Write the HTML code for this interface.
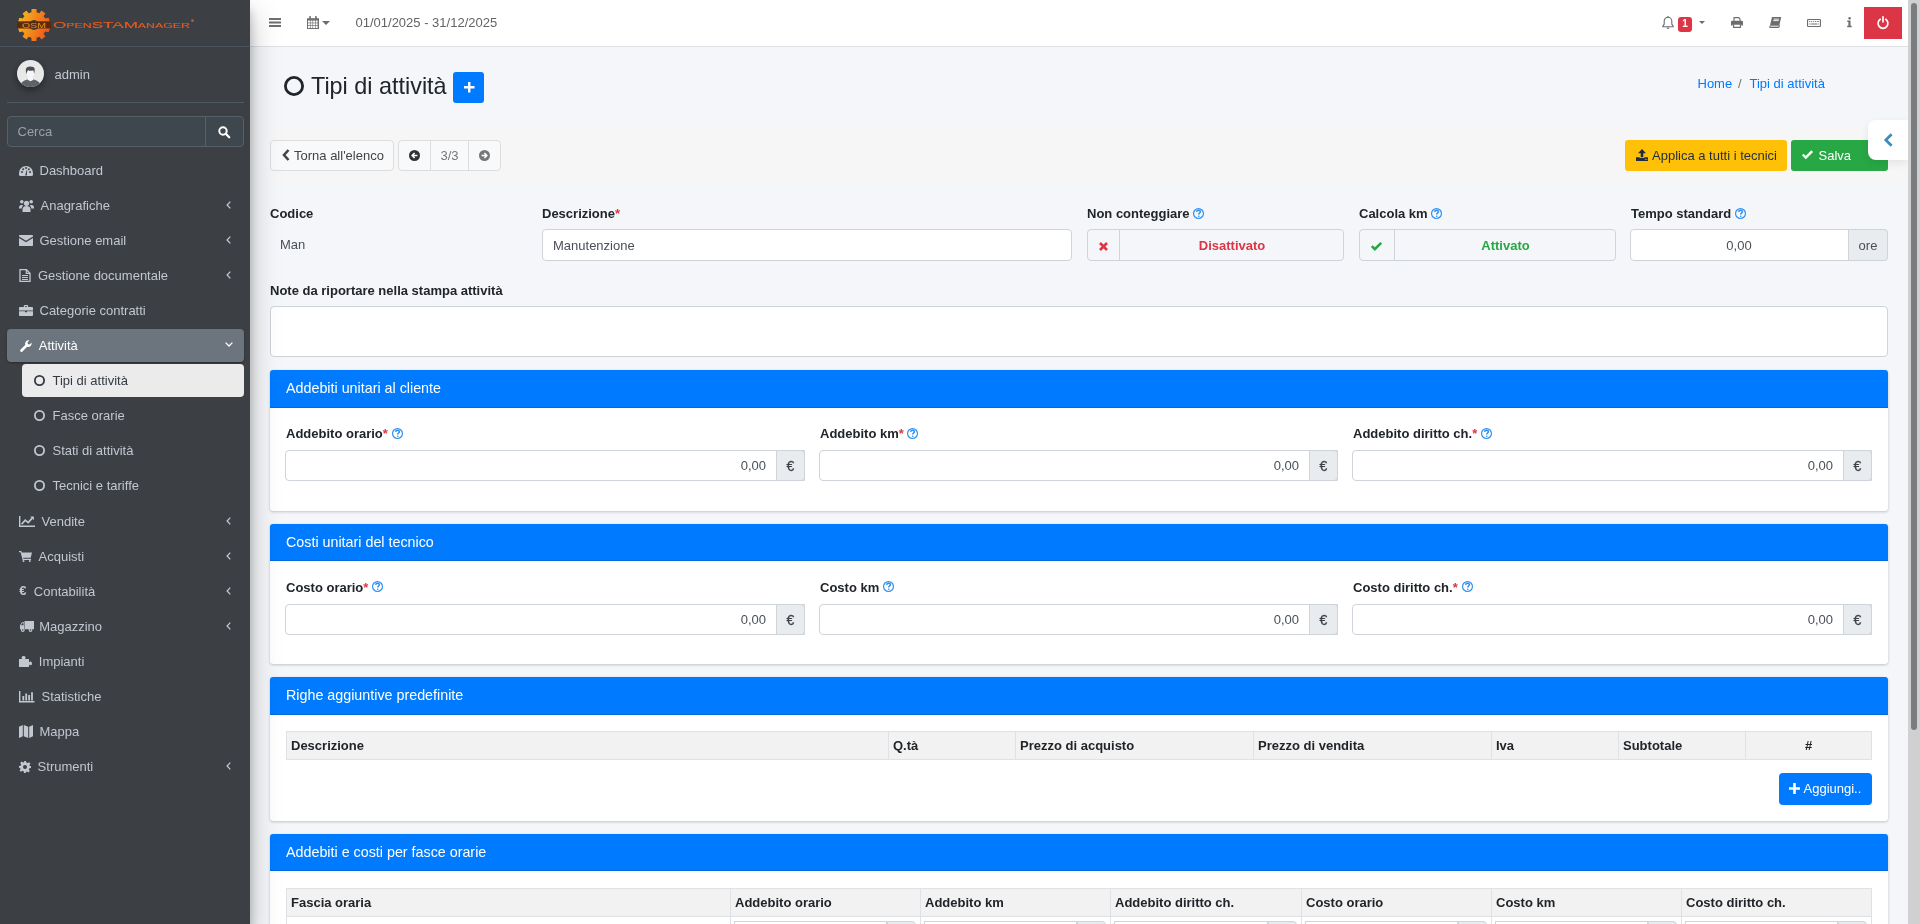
<!DOCTYPE html><html><head><meta charset="utf-8"><style>
*{box-sizing:border-box;margin:0;padding:0}
html,body{width:1920px;height:924px;overflow:hidden}
body{font-family:"Liberation Sans",sans-serif;font-size:13px;color:#212529;background:#f4f6f9;position:relative;will-change:transform}
.a{position:absolute}
svg{display:block;overflow:visible}
.t{position:absolute;white-space:nowrap;line-height:15px}
#sb{position:absolute;left:0;top:0;width:250px;height:924px;background:#3c3f44;z-index:5;box-shadow:0 14px 28px rgba(0,0,0,.25),0 10px 10px rgba(0,0,0,.22)}
#nb{position:absolute;left:250px;top:0;width:1658px;height:47px;background:#fff;border-bottom:1px solid #dee2e6}
.nav{position:absolute;left:7px;width:237px;height:33px;border-radius:4px;color:#c2c7d0}
.nav.active{background:#6c757d;color:#fff;box-shadow:0 1px 3px rgba(0,0,0,.12),0 1px 2px rgba(0,0,0,.24)}
.nav.sub{left:22px;width:222px}
.nav.subact{background:#ebebeb;color:#343a40}
.card{position:absolute;left:270px;width:1618px;background:#fff;border-radius:3px;box-shadow:0 0 1px rgba(0,0,0,.125),0 1px 3px rgba(0,0,0,.2)}
.card .hd{position:absolute;left:0;top:0;width:100%;height:38px;background:#007bff;border-radius:3px 3px 0 0}
.card .hd .t{left:16px;top:10px;color:#fff;font-size:14.3px;line-height:17px}
.lbl{position:absolute;white-space:nowrap;font-weight:bold;font-size:13px;line-height:15px;color:#212529}
.req{color:#dc3545}
.inp{position:absolute;height:31px;background:#fff;border:1px solid #ced4da;border-radius:4px}
.addon{position:absolute;top:-1px;height:31px;background:#e9ecef;border:1px solid #ced4da;border-radius:0 4px 4px 0;color:#495057}
.th{position:absolute;height:29px;background:#f2f2f2;border:1px solid #dee2e6}
.th .c{position:absolute;top:0;height:27px;border-left:1px solid #dee2e6}
.th .c .t{top:7px;left:5px;font-weight:bold;color:#212529}
</style></head><body>
<div id="sb">
<div class="a" style="left:0;top:46px;width:250px;height:1px;background:#4b545c"></div>
<svg class="a" style="left:17.5px;top:8.5px" width="32" height="32" viewBox="0 0 32 32">
<defs><linearGradient id="gg" x1="0" y1="0" x2="1" y2=".35"><stop offset="0" stop-color="#f9c21b"/><stop offset="1" stop-color="#ef5d1d"/></linearGradient></defs>
<path fill="url(#gg)" fill-rule="evenodd" d="M13.55 -0.12 L18.45 -0.12 L18.60 3.26 L21.39 4.17 L23.49 1.52 L27.45 4.40 L25.59 7.22 L27.31 9.59 L30.57 8.69 L32.08 13.35 L28.92 14.53 L28.92 17.47 L32.08 18.65 L30.57 23.31 L27.31 22.41 L25.59 24.78 L27.45 27.60 L23.49 30.48 L21.39 27.83 L18.60 28.74 L18.45 32.12 L13.55 32.12 L13.40 28.74 L10.61 27.83 L8.51 30.48 L4.55 27.60 L6.41 24.78 L4.69 22.41 L1.43 23.31 L-0.08 18.65 L3.08 17.47 L3.08 14.53 L-0.08 13.35 L1.43 8.69 L4.69 9.59 L6.41 7.22 L4.55 4.40 L8.51 1.52 L10.61 4.17 L13.40 3.26ZM16 11.0a5.0 5.0 0 1 0 0.01 0z"/>
<rect x="-1" y="12.3" width="34" height="7.2" fill="#5a280b" opacity=".95"/>
<text x="16" y="18.6" text-anchor="middle" font-family="Liberation Sans" font-size="6.8" fill="#e8961e" textLength="24" lengthAdjust="spacingAndGlyphs">OSM</text>
</svg>
<svg class="a" style="left:53px;top:15px" width="140" height="16" viewBox="0 0 140 16"><text x="0" y="13.3" font-family="Liberation Sans" font-size="9.7" fill="#ea5b1f" font-variant="small-caps" stroke="#ea5b1f" stroke-width=".12" textLength="137" lengthAdjust="spacingAndGlyphs">OpenSTAManager</text></svg>
<div class="a" style="left:190.5px;top:19px;width:3px;height:3px;border-radius:2px;background:#b35a30"></div>
<div class="a" style="left:17px;top:60px;width:27px;height:27px;border-radius:50%;box-shadow:0 3px 6px rgba(0,0,0,.16),0 3px 6px rgba(0,0,0,.23)"></div>
<svg class="a" style="left:17px;top:60px" width="27" height="27" viewBox="0 0 27 27">
<defs><clipPath id="cp"><circle cx="13.5" cy="13.5" r="13.5"/></clipPath></defs>
<circle cx="13.5" cy="13.5" r="13.5" fill="#e8e8e8"/>
<g clip-path="url(#cp)"><path d="M2.5 28c0-5 4.5-8.8 11-8.8s11 3.8 11 8.8z" fill="#5f6266"/>
<path d="M11 16.5h5v3.5l-2.5 1.3-2.5-1.3z" fill="#f6f6f6"/>
<ellipse cx="13.5" cy="12.8" rx="4.2" ry="4.6" fill="#f6f6f6"/>
<path d="M9.3 14.5c-.3-1.5-.6-3.2-.5-4.8.2-2.3 1.8-3.3 4.3-3.3 2.6 0 4.4.7 4.6 2.5.1 1.5-.2 3.2-.6 5-.2-1.5-.4-2.6-.8-3.3-1.7.3-3.6.2-5.3-.4-.8.8-1.3 2.2-1.7 4.3z" fill="#4a4d51"/></g>
</svg>
<div class="t" style="left:54.5px;top:67px;color:#c2c7d0;font-size:13px">admin</div>
<div class="a" style="left:7px;top:102px;width:237px;height:1px;background:#4f5962"></div>
<div class="a" style="left:7px;top:116px;width:237px;height:31px;border:1px solid #56606a;border-radius:4px;background:#3f474e"></div>
<div class="a" style="left:205px;top:117px;width:1px;height:29px;background:#56606a"></div>
<div class="t" style="left:17.5px;top:123.5px;color:#9ba1a8;font-size:13px">Cerca</div>
<svg class="a" style="left:218px;top:126px" width="13" height="12" viewBox="0 0 13 12"><circle cx="5" cy="5" r="3.7" fill="none" stroke="#fff" stroke-width="2"/><path d="M7.8 7.8l3.4 3.4" stroke="#fff" stroke-width="2.3" stroke-linecap="round"/></svg>
<div class="nav " style="top:153.50px">
<div class="a" style="left:12px;top:12px"><svg width="14" height="10" viewBox="0 0 14 10"><path d="M7 0A7 7 0 0 0 0 7v1.5q0 1.5 1.5 1.5h11q1.5 0 1.5-1.5V7A7 7 0 0 0 7 0z" fill="#c2c7d0"/><g fill="#3c3f44"><circle cx="3" cy="6" r="1"/><circle cx="4.2" cy="3.2" r="1"/><circle cx="7" cy="2" r="1"/><circle cx="11" cy="6" r="1"/><circle cx="9.8" cy="3.2" r="1"/><path d="M6.2 9.5L7.6 4.2 8.2 4.4 7.8 9.5z"/></g></svg></div>
<div class="t" style="left:32.5px;top:9px;line-height:15px;color:#c2c7d0">Dashboard</div>
</div>
<div class="nav " style="top:188.60px">
<div class="a" style="left:12px;top:10px"><svg width="15" height="13" viewBox="0 0 15 13"><g fill="#c2c7d0"><circle cx="7.5" cy="4.3" r="2.6"/><circle cx="2.8" cy="2.8" r="1.8"/><circle cx="12.2" cy="2.8" r="1.8"/><path d="M3.5 13v-2.5q0-3.5 4-3.5t4 3.5V13z"/><path d="M0 9q0-3 2.5-3 1.3 0 1.8.6Q2.7 8 2.7 9.5H0z"/><path d="M15 9q0-3-2.5-3-1.3 0-1.8.6 1.6 1.4 1.6 2.9H15z"/></g></svg></div>
<div class="t" style="left:33.5px;top:9px;line-height:15px;color:#c2c7d0">Anagrafiche</div>
<svg class="a" style="left:218.5px;top:12px" width="5" height="8" viewBox="0 0 5 8"><path d="M4.3.6L1.1 4l3.2 3.4" fill="none" stroke="#c2c7d0" stroke-width="1.3"/></svg>
</div>
<div class="nav " style="top:223.70px">
<div class="a" style="left:12px;top:11.5px"><svg width="14" height="11" viewBox="0 0 14 11"><g fill="#c2c7d0"><path d="M0 .8Q0 0 .8 0h12.4q.8 0 .8.8v.7L7 5.8 0 1.5z"/><path d="M0 3l7 4.3L14 3v7.2q0 .8-.8.8H.8Q0 11 0 10.2z"/></g></svg></div>
<div class="t" style="left:32.5px;top:9px;line-height:15px;color:#c2c7d0">Gestione email</div>
<svg class="a" style="left:218.5px;top:12px" width="5" height="8" viewBox="0 0 5 8"><path d="M4.3.6L1.1 4l3.2 3.4" fill="none" stroke="#c2c7d0" stroke-width="1.3"/></svg>
</div>
<div class="nav " style="top:258.80px">
<div class="a" style="left:12px;top:10px"><svg width="12" height="13" viewBox="0 0 12 13"><path d="M1 .7h6.5L11 4.2v8.1H1z" fill="none" stroke="#c2c7d0" stroke-width="1.3"/><path d="M7.3.7v3.6H11" fill="none" stroke="#c2c7d0" stroke-width="1.2"/><path d="M3 6.5h6M3 8.5h6M3 10.5h6" stroke="#c2c7d0" stroke-width="1"/></svg></div>
<div class="t" style="left:31px;top:9px;line-height:15px;color:#c2c7d0">Gestione documentale</div>
<svg class="a" style="left:218.5px;top:12px" width="5" height="8" viewBox="0 0 5 8"><path d="M4.3.6L1.1 4l3.2 3.4" fill="none" stroke="#c2c7d0" stroke-width="1.3"/></svg>
</div>
<div class="nav " style="top:293.90px">
<div class="a" style="left:12px;top:11px"><svg width="14" height="11" viewBox="0 0 14 11"><g fill="#c2c7d0"><path d="M4.8 2V.9Q4.8 0 5.7 0h2.6q.9 0 .9.9V2H8V1.2H6V2z"/><path d="M0 3q0-1 1-1h12q1 0 1 1v2.5H0z"/><path d="M0 6.3h6v1h2v-1h6V10q0 1-1 1H1q-1 0-1-1z"/></g></svg></div>
<div class="t" style="left:32.5px;top:9px;line-height:15px;color:#c2c7d0">Categorie contratti</div>
</div>
<div class="nav active" style="top:329.00px">
<div class="a" style="left:12.5px;top:11px"><svg width="12" height="12" viewBox="0 0 12 12"><path d="M11.6 2.6L9.7 4.5 7.9 4.1 7.5 2.3 9.4.4A3.5 3.5 0 0 0 5.2 4.9L.6 9.5a1.3 1.3 0 0 0 0 1.9 1.3 1.3 0 0 0 1.9 0l4.6-4.6a3.5 3.5 0 0 0 4.5-4.2z" fill="#fff"/></svg></div>
<div class="t" style="left:31.799999999999997px;top:9px;line-height:15px;color:#fff">Attività</div>
<svg class="a" style="left:217.8px;top:12.6px" width="8" height="5" viewBox="0 0 8 5"><path d="M.6.6L4 4l3.4-3.4" fill="none" stroke="#fff" stroke-width="1.3"/></svg>
</div>
<div class="nav sub subact" style="top:364.10px">
<div class="a" style="left:12px;top:11px"><svg width="11" height="11" viewBox="0 0 11 11"><circle cx="5.5" cy="5.5" r="4.6" fill="none" stroke="#343a40" stroke-width="1.8"/></svg></div>
<div class="t" style="left:30.5px;top:9px;line-height:15px;color:#343a40">Tipi di attività</div>
</div>
<div class="nav sub" style="top:399.20px">
<div class="a" style="left:12px;top:11px"><svg width="11" height="11" viewBox="0 0 11 11"><circle cx="5.5" cy="5.5" r="4.6" fill="none" stroke="#c2c7d0" stroke-width="1.8"/></svg></div>
<div class="t" style="left:30.5px;top:9px;line-height:15px;color:#c2c7d0">Fasce orarie</div>
</div>
<div class="nav sub" style="top:434.30px">
<div class="a" style="left:12px;top:11px"><svg width="11" height="11" viewBox="0 0 11 11"><circle cx="5.5" cy="5.5" r="4.6" fill="none" stroke="#c2c7d0" stroke-width="1.8"/></svg></div>
<div class="t" style="left:30.5px;top:9px;line-height:15px;color:#c2c7d0">Stati di attività</div>
</div>
<div class="nav sub" style="top:469.40px">
<div class="a" style="left:12px;top:11px"><svg width="11" height="11" viewBox="0 0 11 11"><circle cx="5.5" cy="5.5" r="4.6" fill="none" stroke="#c2c7d0" stroke-width="1.8"/></svg></div>
<div class="t" style="left:30.5px;top:9px;line-height:15px;color:#c2c7d0">Tecnici e tariffe</div>
</div>
<div class="nav " style="top:504.50px">
<div class="a" style="left:12px;top:11px"><svg width="16" height="11" viewBox="0 0 16 11"><path d="M.7 0v10.3H16" fill="none" stroke="#c2c7d0" stroke-width="1.4"/><path d="M2.6 8.2l3.6-4 3 2.4L13.6 1.6" fill="none" stroke="#c2c7d0" stroke-width="1.7"/><path d="M11.3 .6h3.6v3.6z" fill="#c2c7d0"/></svg></div>
<div class="t" style="left:34.5px;top:9px;line-height:15px;color:#c2c7d0">Vendite</div>
<svg class="a" style="left:218.5px;top:12px" width="5" height="8" viewBox="0 0 5 8"><path d="M4.3.6L1.1 4l3.2 3.4" fill="none" stroke="#c2c7d0" stroke-width="1.3"/></svg>
</div>
<div class="nav " style="top:539.60px">
<div class="a" style="left:12.2px;top:11px"><svg width="13" height="11" viewBox="0 0 13 11"><g fill="#c2c7d0"><path d="M0 0h2.3l.5 1.5H13l-1.3 5.2H4.1l.4 1H12v1.2H3.6L1.6 1.2H0z"/><circle cx="4.5" cy="10" r="1"/><circle cx="10.8" cy="10" r="1"/></g></svg></div>
<div class="t" style="left:31.6px;top:9px;line-height:15px;color:#c2c7d0">Acquisti</div>
<svg class="a" style="left:218.5px;top:12px" width="5" height="8" viewBox="0 0 5 8"><path d="M4.3.6L1.1 4l3.2 3.4" fill="none" stroke="#c2c7d0" stroke-width="1.3"/></svg>
</div>
<div class="nav " style="top:574.70px">
<div class="a" style="left:12.7px;top:11px"><div style="font-weight:bold;font-size:13px;line-height:15px;color:#c2c7d0;margin-top:-3px;margin-left:-.5px">€</div></div>
<div class="t" style="left:26.799999999999997px;top:9px;line-height:15px;color:#c2c7d0">Contabilità</div>
<svg class="a" style="left:218.5px;top:12px" width="5" height="8" viewBox="0 0 5 8"><path d="M4.3.6L1.1 4l3.2 3.4" fill="none" stroke="#c2c7d0" stroke-width="1.3"/></svg>
</div>
<div class="nav " style="top:609.80px">
<div class="a" style="left:12.7px;top:11px"><svg width="14" height="11" viewBox="0 0 14 11"><g fill="#c2c7d0"><path d="M4.5 0h9.5v8.2H4.5z"/><path d="M0 4.2l2-3h2v7H0z"/><circle cx="2.8" cy="9" r="1.9"/><circle cx="10.5" cy="9" r="1.9"/></g><g fill="#3c3f44"><circle cx="2.8" cy="9" r=".8"/><circle cx="10.5" cy="9" r=".8"/><path d="M1 4.2l1.2-2h1.3v2z"/></g></svg></div>
<div class="t" style="left:32.2px;top:9px;line-height:15px;color:#c2c7d0">Magazzino</div>
<svg class="a" style="left:218.5px;top:12px" width="5" height="8" viewBox="0 0 5 8"><path d="M4.3.6L1.1 4l3.2 3.4" fill="none" stroke="#c2c7d0" stroke-width="1.3"/></svg>
</div>
<div class="nav " style="top:644.90px">
<div class="a" style="left:11.8px;top:11px"><svg width="13" height="11" viewBox="0 0 13 11"><path d="M0 3h3.3Q2.4 2.2 2.6 1.2 3 0 4.6 0t2 1.2q.2 1-.7 1.8H10v3.3q.8-.9 1.8-.7Q13 6 13 7.5T11.8 9.2Q10.8 9.4 10 8.5V11H0z" fill="#c2c7d0"/></svg></div>
<div class="t" style="left:31.799999999999997px;top:9px;line-height:15px;color:#c2c7d0">Impianti</div>
</div>
<div class="nav " style="top:680.00px">
<div class="a" style="left:12px;top:10.5px"><svg width="16" height="11.5" viewBox="0 0 16 11.5"><path d="M.7 0v10.8H15.5" fill="none" stroke="#c2c7d0" stroke-width="1.4"/><path d="M3.4 5h1.8v4.5H3.4zM6.3 2.5h1.8v7H6.3zM9.2 4h1.8v5.5H9.2zM12.1 1.2h1.8v8.3h-1.8z" fill="#c2c7d0"/></svg></div>
<div class="t" style="left:34.5px;top:9px;line-height:15px;color:#c2c7d0">Statistiche</div>
</div>
<div class="nav " style="top:715.10px">
<div class="a" style="left:12px;top:10px"><svg width="14" height="13" viewBox="0 0 14 13"><g fill="#c2c7d0"><path d="M0 1.8L3.8 0v11.2L0 13z"/><path d="M4.8 0l4.4 1.8V13L4.8 11.2z"/><path d="M10.2 1.8L14 0v11.2L10.2 13z"/></g></svg></div>
<div class="t" style="left:32.4px;top:9px;line-height:15px;color:#c2c7d0">Mappa</div>
</div>
<div class="nav " style="top:750.20px">
<div class="a" style="left:12px;top:10.5px"><svg width="12" height="12" viewBox="0 0 12 12" style="margin-top:0"><path d="M5 0h2l.3 1.6a4.6 4.6 0 0 1 1.3.6l1.4-1 1.4 1.4-1 1.4a4.6 4.6 0 0 1 .6 1.3L12 5v2l-1.6.3a4.6 4.6 0 0 1-.6 1.3l1 1.4-1.4 1.4-1.4-1a4.6 4.6 0 0 1-1.3.6L7 12H5l-.3-1.6a4.6 4.6 0 0 1-1.3-.6l-1.4 1-1.4-1.4 1-1.4a4.6 4.6 0 0 1-.6-1.3L0 7V5l1.6-.3a4.6 4.6 0 0 1 .6-1.3l-1-1.4 1.4-1.4 1.4 1a4.6 4.6 0 0 1 1.3-.6zM6 4a2 2 0 1 0 0 4 2 2 0 0 0 0-4z" fill="#c2c7d0"/></svg></div>
<div class="t" style="left:30.6px;top:9px;line-height:15px;color:#c2c7d0">Strumenti</div>
<svg class="a" style="left:218.5px;top:12px" width="5" height="8" viewBox="0 0 5 8"><path d="M4.3.6L1.1 4l3.2 3.4" fill="none" stroke="#c2c7d0" stroke-width="1.3"/></svg>
</div>
</div>
<div id="nb"></div>
<svg class="a" style="left:269px;top:18px" width="12" height="9" viewBox="0 0 12 9"><path d="M0 .1h12v1.8H0zM0 3.6h12v1.8H0zM0 7.1h12v1.8H0z" fill="#707070"/></svg>
<svg class="a" style="left:307px;top:16px" width="12" height="13" viewBox="0 0 12 13"><g fill="#707070"><path d="M0 2.2h12v10.8H0z"/><rect x="2.2" y="0" width="1.7" height="3.3" rx=".6"/><rect x="8.1" y="0" width="1.7" height="3.3" rx=".6"/></g><g fill="#fff"><rect x="1.00" y="4.6" width="1.95" height="2.0"/><rect x="3.55" y="4.6" width="1.95" height="2.0"/><rect x="6.10" y="4.6" width="1.95" height="2.0"/><rect x="8.65" y="4.6" width="1.95" height="2.0"/><rect x="1.00" y="7.3" width="1.95" height="2.0"/><rect x="3.55" y="7.3" width="1.95" height="2.0"/><rect x="6.10" y="7.3" width="1.95" height="2.0"/><rect x="8.65" y="7.3" width="1.95" height="2.0"/><rect x="1.00" y="10.0" width="1.95" height="2.0"/><rect x="3.55" y="10.0" width="1.95" height="2.0"/><rect x="6.10" y="10.0" width="1.95" height="2.0"/><rect x="8.65" y="10.0" width="1.95" height="2.0"/></g></svg>
<svg class="a" style="left:322px;top:21px" width="8" height="4" viewBox="0 0 8 4"><path d="M0 0h8L4 4z" fill="#6c6c6c"/></svg>
<div class="t" style="left:355.5px;top:15px;color:#646464;font-size:13px">01/01/2025 - 31/12/2025</div>
<svg class="a" style="left:1662px;top:16px" width="12" height="13" viewBox="0 0 12 13"><path d="M6 1.2a3.8 3.8 0 0 0-3.8 3.8v3.2L.8 10.1v.7h10.4v-.7L9.8 8.2V5A3.8 3.8 0 0 0 6 1.2z" fill="none" stroke="#6c6c6c" stroke-width="1.1"/><path d="M4.6 11.6a1.4 1.4 0 0 0 2.8 0z" fill="#6c6c6c"/><rect x="5.4" y="0" width="1.2" height="1.5" fill="#6c6c6c"/></svg>
<div class="a" style="left:1678px;top:17px;width:14px;height:15px;border-radius:3px;background:#dc3545"></div>
<div class="t" style="left:1678px;top:17.5px;width:14px;text-align:center;color:#fff;font-size:10px;line-height:12px;font-weight:bold">1</div>
<svg class="a" style="left:1699px;top:21px" width="6" height="3" viewBox="0 0 6 3"><path d="M0 0h6L3 3z" fill="#6c6c6c"/></svg>
<svg class="a" style="left:1731px;top:17px" width="12" height="11" viewBox="0 0 12 11"><path d="M3 .6h4.6l1.4 1.4v2.6H3z" fill="#fff" stroke="#6c6c6c" stroke-width="1.1"/><path d="M0 5q0-1.2 1.2-1.2h9.6Q12 3.8 12 5v3.5h-1.8V7H1.8v1.5H0z" fill="#6c6c6c"/><path d="M2.6 7.3h6.8v3.1H2.6z" fill="#fff" stroke="#6c6c6c" stroke-width="1.1"/></svg>
<svg class="a" style="left:1769px;top:17px" width="13" height="11" viewBox="0 0 13 11"><path d="M3 0h9.2L10.3 8.4H1z" fill="#6c6c6c"/><path d="M4.6 2.1h5.4M4.3 3.6h5.4" stroke="#fff" stroke-width=".9"/><path d="M1 8.4h9.3l.9-.9-.6 2.6q-.2.8-1 .8H1.2Q0 10.9.2 9.7z" fill="#6c6c6c"/><path d="M1.4 9.4h8.2" stroke="#fff" stroke-width=".7"/></svg>
<svg class="a" style="left:1807px;top:19px" width="14" height="8" viewBox="0 0 14 8"><rect x=".55" y=".55" width="12.9" height="6.9" rx=".8" fill="none" stroke="#6c6c6c" stroke-width="1.1"/><g fill="#6c6c6c"><path d="M2.2 2h1v1h-1zM4.2 2h1v1h-1zM6.2 2h1v1h-1zM8.2 2h1v1h-1zM10.2 2h1.6v1h-1.6zM2.2 4.6h1.2v1h-1.2zM4 4.6h6v1H4zM10.6 4.6h1.2v1h-1.2z"/></g></svg>
<svg class="a" style="left:1846.5px;top:16.7px" width="5" height="10.3" viewBox="0 0 5 10.3"><g fill="#6c6c6c"><circle cx="2.6" cy="1.2" r="1.2"/><path d="M.3 3.6h3.2v5.2h1.2v1.5H.2V8.8h1.2V5.1H.3z"/></g></svg>
<div class="a" style="left:1864px;top:7px;width:38px;height:32px;background:#dc3545"></div>
<svg class="a" style="left:1877px;top:16px" width="12" height="13" viewBox="0 0 12 13"><path d="M3.3 3.3a4.9 4.9 0 1 0 5.4 0" fill="none" stroke="#fff" stroke-width="1.7" stroke-linecap="round"/><path d="M6 .8v5" stroke="#fff" stroke-width="1.7" stroke-linecap="round"/></svg>
<svg class="a" style="left:284px;top:76px" width="20" height="20" viewBox="0 0 20 20"><circle cx="10" cy="10" r="8.6" fill="none" stroke="#212529" stroke-width="2.8"/></svg>
<div class="t" style="left:311px;top:73px;font-size:23.4px;line-height:27px;color:#212529">Tipi di attività</div>
<div class="a" style="left:453px;top:72px;width:31px;height:31px;border-radius:3px;background:#007bff"></div>
<svg class="a" style="left:463.5px;top:82px" width="10.5" height="10.5" viewBox="0 0 10.5 10.5"><path d="M4.05 0h2.4v4.05h4.05v2.4H6.45v4.05h-2.4V6.45H0v-2.4h4.05z" fill="#fff"/></svg>
<div class="t" style="left:1697.5px;top:76px;color:#007bff">Home</div>
<div class="t" style="left:1738px;top:76px;color:#6c757d">/</div>
<div class="t" style="left:1749.5px;top:76px;color:#007bff">Tipi di attività</div>
<div class="a" style="left:270px;top:126px;width:1638px;height:58px;background:#f6f6f6"></div>
<div class="a" style="left:270px;top:140px;width:124px;height:31px;background:#f8f9fa;border:1px solid #ddd;border-radius:4px"></div>
<svg class="a" style="left:282px;top:149px" width="8" height="12" viewBox="0 0 8 12"><path d="M6.5 1L2 6l4.5 5" fill="none" stroke="#444" stroke-width="2.6"/></svg>
<div class="t" style="left:294px;top:147.5px;color:#444">Torna all'elenco</div>
<div class="a" style="left:398px;top:140px;width:103px;height:31px;background:#f8f9fa;border:1px solid #ddd;border-radius:4px"></div>
<div class="a" style="left:430px;top:141px;width:1px;height:29px;background:#ddd"></div>
<div class="a" style="left:468px;top:141px;width:1px;height:29px;background:#ddd"></div>
<svg class="a" style="left:408.5px;top:150px" width="11" height="11" viewBox="0 0 11 11"><circle cx="5.5" cy="5.5" r="5.5" fill="#333"/><path d="M8.4 5.5H3.4M5.6 3L3.2 5.5 5.6 8" fill="none" stroke="#fff" stroke-width="1.6"/></svg>
<div class="t" style="left:440.5px;top:147.5px;color:#777">3/3</div>
<svg class="a" style="left:479px;top:150px" width="11" height="11" viewBox="0 0 11 11"><circle cx="5.5" cy="5.5" r="5.5" fill="#777"/><path d="M2.6 5.5h5M5.4 3l2.4 2.5L5.4 8" fill="none" stroke="#fff" stroke-width="1.6"/></svg>
<div class="a" style="left:1625px;top:140px;width:162px;height:31px;background:#ffc107;border-radius:3px"></div>
<svg class="a" style="left:1636px;top:149px" width="12" height="12" viewBox="0 0 12 12"><path d="M6 0l4 4.2H7.3v4H4.7v-4H2z" fill="#1f2d3d"/><path d="M0 8.2h3.7v.9h4.6v-.9H12V12H0z" fill="#1f2d3d"/><circle cx="9.3" cy="10.3" r=".5" fill="#ffc107"/><circle cx="10.8" cy="10.3" r=".5" fill="#ffc107"/></svg>
<div class="t" style="left:1652px;top:147.5px;color:#1f2d3d">Applica a tutti i tecnici</div>
<div class="a" style="left:1791px;top:140px;width:97px;height:31px;background:#28a745;border-radius:3px"></div>
<svg class="a" style="left:1802px;top:150px" width="11" height="9" viewBox="0 0 11 9"><path d="M.8 4.5l3 3 6.4-6.4" fill="none" stroke="#fff" stroke-width="2.4"/></svg>
<div class="t" style="left:1818.5px;top:147.5px;color:#fff">Salva</div>
<div class="a" style="left:1868px;top:120px;width:40px;height:40px;background:#fff;border-radius:8px 0 0 8px;box-shadow:0 3px 8px rgba(0,0,0,.08)"></div>
<svg class="a" style="left:1884px;top:132.5px" width="9" height="14" viewBox="0 0 9 14"><path d="M7.6 1.2L1.8 7l5.8 5.8" fill="none" stroke="#3c8dbc" stroke-width="2.7"/></svg>
<div class="lbl" style="left:270px;top:206px">Codice</div>
<div class="t" style="left:280px;top:237px;color:#495057">Man</div>
<div class="lbl" style="left:542px;top:206px">Descrizione<span class="req">*</span></div>
<div class="inp" style="left:542px;top:229px;width:530px;height:32px"></div>
<div class="t" style="left:553px;top:238px;color:#495057">Manutenzione</div>
<div class="lbl" style="left:1087px;top:206px">Non conteggiare</div>
<svg class="a" style="left:1193px;top:207.5px" width="11" height="11" viewBox="0 0 11 11"><circle cx="5.5" cy="5.5" r="4.95" fill="none" stroke="#2b8ff2" stroke-width="1.15"/><path d="M3.6 3.9q.3-1.6 2-1.6 1.8 0 1.8 1.5 0 .8-.9 1.3-.7.4-.7 1.2v.3" fill="none" stroke="#2b8ff2" stroke-width="1.5"/><circle cx="5.75" cy="8.3" r=".8" fill="#2b8ff2"/></svg>
<div class="a" style="left:1087px;top:229px;width:257px;height:32px;border:1px solid #ced4da;border-radius:4px"></div>
<div class="a" style="left:1119px;top:230px;width:1px;height:30px;background:#ced4da"></div>
<svg class="a" style="left:1099px;top:241.5px" width="9" height="9" viewBox="0 0 9 9"><path d="M1 1l7 7M8 1L1 8" stroke="#dc3545" stroke-width="2.6"/></svg>
<div class="t" style="left:1120px;top:238px;width:224px;text-align:center;color:#dc3545;font-weight:bold">Disattivato</div>
<div class="lbl" style="left:1359px;top:206px">Calcola km</div>
<svg class="a" style="left:1431px;top:207.5px" width="11" height="11" viewBox="0 0 11 11"><circle cx="5.5" cy="5.5" r="4.95" fill="none" stroke="#2b8ff2" stroke-width="1.15"/><path d="M3.6 3.9q.3-1.6 2-1.6 1.8 0 1.8 1.5 0 .8-.9 1.3-.7.4-.7 1.2v.3" fill="none" stroke="#2b8ff2" stroke-width="1.5"/><circle cx="5.75" cy="8.3" r=".8" fill="#2b8ff2"/></svg>
<div class="a" style="left:1359px;top:229px;width:257px;height:32px;border:1px solid #ced4da;border-radius:4px"></div>
<div class="a" style="left:1394px;top:230px;width:1px;height:30px;background:#ced4da"></div>
<svg class="a" style="left:1371px;top:241.5px" width="11" height="9" viewBox="0 0 11 9"><path d="M.8 4.2l3 3L10.2.8" fill="none" stroke="#28a745" stroke-width="2.6"/></svg>
<div class="t" style="left:1395px;top:238px;width:221px;text-align:center;color:#28a745;font-weight:bold">Attivato</div>
<div class="lbl" style="left:1631px;top:206px">Tempo standard</div>
<svg class="a" style="left:1734.5px;top:207.5px" width="11" height="11" viewBox="0 0 11 11"><circle cx="5.5" cy="5.5" r="4.95" fill="none" stroke="#2b8ff2" stroke-width="1.15"/><path d="M3.6 3.9q.3-1.6 2-1.6 1.8 0 1.8 1.5 0 .8-.9 1.3-.7.4-.7 1.2v.3" fill="none" stroke="#2b8ff2" stroke-width="1.5"/><circle cx="5.75" cy="8.3" r=".8" fill="#2b8ff2"/></svg>
<div class="inp" style="left:1630px;top:229px;width:258px;height:32px"></div>
<div class="a" style="left:1848px;top:229px;width:40px;height:32px;background:#e9ecef;border:1px solid #ced4da;border-radius:0 4px 4px 0"></div>
<div class="t" style="left:1630px;top:238px;width:218px;text-align:center;color:#495057">0,00</div>
<div class="t" style="left:1848px;top:238px;width:40px;text-align:center;color:#495057">ore</div>
<div class="lbl" style="left:270px;top:283px">Note da riportare nella stampa attività</div>
<div class="inp" style="left:270px;top:306px;width:1618px;height:51px"></div>
<div class="card" style="top:370px;height:141px"><div class="hd" style="height:38px;border-bottom:1px solid rgba(0,0,0,.125)"><div class="t">Addebiti unitari al cliente</div></div></div>
<div class="lbl" style="left:286px;top:426px">Addebito orario<span class="req">*</span></div>
<svg class="a" style="left:391.5px;top:427.5px" width="11" height="11" viewBox="0 0 11 11"><circle cx="5.5" cy="5.5" r="4.95" fill="none" stroke="#2b8ff2" stroke-width="1.15"/><path d="M3.6 3.9q.3-1.6 2-1.6 1.8 0 1.8 1.5 0 .8-.9 1.3-.7.4-.7 1.2v.3" fill="none" stroke="#2b8ff2" stroke-width="1.5"/><circle cx="5.75" cy="8.3" r=".8" fill="#2b8ff2"/></svg>
<div class="lbl" style="left:820px;top:426px">Addebito km<span class="req">*</span></div>
<svg class="a" style="left:907px;top:427.5px" width="11" height="11" viewBox="0 0 11 11"><circle cx="5.5" cy="5.5" r="4.95" fill="none" stroke="#2b8ff2" stroke-width="1.15"/><path d="M3.6 3.9q.3-1.6 2-1.6 1.8 0 1.8 1.5 0 .8-.9 1.3-.7.4-.7 1.2v.3" fill="none" stroke="#2b8ff2" stroke-width="1.5"/><circle cx="5.75" cy="8.3" r=".8" fill="#2b8ff2"/></svg>
<div class="lbl" style="left:1353px;top:426px">Addebito diritto ch.<span class="req">*</span></div>
<svg class="a" style="left:1481px;top:427.5px" width="11" height="11" viewBox="0 0 11 11"><circle cx="5.5" cy="5.5" r="4.95" fill="none" stroke="#2b8ff2" stroke-width="1.15"/><path d="M3.6 3.9q.3-1.6 2-1.6 1.8 0 1.8 1.5 0 .8-.9 1.3-.7.4-.7 1.2v.3" fill="none" stroke="#2b8ff2" stroke-width="1.5"/><circle cx="5.75" cy="8.3" r=".8" fill="#2b8ff2"/></svg>
<div class="inp" style="left:285px;top:450px;width:520px;height:31px;border-radius:4px 0 0 4px"></div>
<div class="a" style="left:776px;top:450px;width:29px;height:31px;background:#e9ecef;border:1px solid #ced4da;border-radius:0 4px 4px 0"></div>
<div class="t" style="left:285px;top:457.5px;width:481px;text-align:right;color:#495057">0,00</div>
<div class="t" style="left:776px;top:459px;width:29px;text-align:center;color:#3d4349;font-size:14px;-webkit-text-stroke:.3px #3d4349">€</div>
<div class="inp" style="left:819px;top:450px;width:519px;height:31px;border-radius:4px 0 0 4px"></div>
<div class="a" style="left:1309px;top:450px;width:29px;height:31px;background:#e9ecef;border:1px solid #ced4da;border-radius:0 4px 4px 0"></div>
<div class="t" style="left:819px;top:457.5px;width:480px;text-align:right;color:#495057">0,00</div>
<div class="t" style="left:1309px;top:459px;width:29px;text-align:center;color:#3d4349;font-size:14px;-webkit-text-stroke:.3px #3d4349">€</div>
<div class="inp" style="left:1352px;top:450px;width:520px;height:31px;border-radius:4px 0 0 4px"></div>
<div class="a" style="left:1843px;top:450px;width:29px;height:31px;background:#e9ecef;border:1px solid #ced4da;border-radius:0 4px 4px 0"></div>
<div class="t" style="left:1352px;top:457.5px;width:481px;text-align:right;color:#495057">0,00</div>
<div class="t" style="left:1843px;top:459px;width:29px;text-align:center;color:#3d4349;font-size:14px;-webkit-text-stroke:.3px #3d4349">€</div>
<div class="card" style="top:524px;height:140px"><div class="hd" style="height:37px;border-bottom:1px solid rgba(0,0,0,.125)"><div class="t">Costi unitari del tecnico</div></div></div>
<div class="lbl" style="left:286px;top:579.5px">Costo orario<span class="req">*</span></div>
<svg class="a" style="left:372px;top:581.0px" width="11" height="11" viewBox="0 0 11 11"><circle cx="5.5" cy="5.5" r="4.95" fill="none" stroke="#2b8ff2" stroke-width="1.15"/><path d="M3.6 3.9q.3-1.6 2-1.6 1.8 0 1.8 1.5 0 .8-.9 1.3-.7.4-.7 1.2v.3" fill="none" stroke="#2b8ff2" stroke-width="1.5"/><circle cx="5.75" cy="8.3" r=".8" fill="#2b8ff2"/></svg>
<div class="lbl" style="left:820px;top:579.5px">Costo km</div>
<svg class="a" style="left:883px;top:581.0px" width="11" height="11" viewBox="0 0 11 11"><circle cx="5.5" cy="5.5" r="4.95" fill="none" stroke="#2b8ff2" stroke-width="1.15"/><path d="M3.6 3.9q.3-1.6 2-1.6 1.8 0 1.8 1.5 0 .8-.9 1.3-.7.4-.7 1.2v.3" fill="none" stroke="#2b8ff2" stroke-width="1.5"/><circle cx="5.75" cy="8.3" r=".8" fill="#2b8ff2"/></svg>
<div class="lbl" style="left:1353px;top:579.5px">Costo diritto ch.<span class="req">*</span></div>
<svg class="a" style="left:1462px;top:581.0px" width="11" height="11" viewBox="0 0 11 11"><circle cx="5.5" cy="5.5" r="4.95" fill="none" stroke="#2b8ff2" stroke-width="1.15"/><path d="M3.6 3.9q.3-1.6 2-1.6 1.8 0 1.8 1.5 0 .8-.9 1.3-.7.4-.7 1.2v.3" fill="none" stroke="#2b8ff2" stroke-width="1.5"/><circle cx="5.75" cy="8.3" r=".8" fill="#2b8ff2"/></svg>
<div class="inp" style="left:285px;top:604px;width:520px;height:31px;border-radius:4px 0 0 4px"></div>
<div class="a" style="left:776px;top:604px;width:29px;height:31px;background:#e9ecef;border:1px solid #ced4da;border-radius:0 4px 4px 0"></div>
<div class="t" style="left:285px;top:611.5px;width:481px;text-align:right;color:#495057">0,00</div>
<div class="t" style="left:776px;top:613px;width:29px;text-align:center;color:#3d4349;font-size:14px;-webkit-text-stroke:.3px #3d4349">€</div>
<div class="inp" style="left:819px;top:604px;width:519px;height:31px;border-radius:4px 0 0 4px"></div>
<div class="a" style="left:1309px;top:604px;width:29px;height:31px;background:#e9ecef;border:1px solid #ced4da;border-radius:0 4px 4px 0"></div>
<div class="t" style="left:819px;top:611.5px;width:480px;text-align:right;color:#495057">0,00</div>
<div class="t" style="left:1309px;top:613px;width:29px;text-align:center;color:#3d4349;font-size:14px;-webkit-text-stroke:.3px #3d4349">€</div>
<div class="inp" style="left:1352px;top:604px;width:520px;height:31px;border-radius:4px 0 0 4px"></div>
<div class="a" style="left:1843px;top:604px;width:29px;height:31px;background:#e9ecef;border:1px solid #ced4da;border-radius:0 4px 4px 0"></div>
<div class="t" style="left:1352px;top:611.5px;width:481px;text-align:right;color:#495057">0,00</div>
<div class="t" style="left:1843px;top:613px;width:29px;text-align:center;color:#3d4349;font-size:14px;-webkit-text-stroke:.3px #3d4349">€</div>
<div class="card" style="top:677px;height:144px"><div class="hd" style="height:38px;border-bottom:1px solid rgba(0,0,0,.125)"><div class="t">Righe aggiuntive predefinite</div></div></div>
<div class="a" style="left:286px;top:731px;width:1586px;height:29px;background:#f2f2f2;border:1px solid #dee2e6"></div>
<div class="t" style="left:291px;top:737.5px;font-weight:bold">Descrizione</div>
<div class="a" style="left:888px;top:731px;width:1px;height:29px;background:#dee2e6"></div>
<div class="t" style="left:893px;top:737.5px;font-weight:bold">Q.tà</div>
<div class="a" style="left:1015px;top:731px;width:1px;height:29px;background:#dee2e6"></div>
<div class="t" style="left:1020px;top:737.5px;font-weight:bold">Prezzo di acquisto</div>
<div class="a" style="left:1253px;top:731px;width:1px;height:29px;background:#dee2e6"></div>
<div class="t" style="left:1258px;top:737.5px;font-weight:bold">Prezzo di vendita</div>
<div class="a" style="left:1491px;top:731px;width:1px;height:29px;background:#dee2e6"></div>
<div class="t" style="left:1496px;top:737.5px;font-weight:bold">Iva</div>
<div class="a" style="left:1618px;top:731px;width:1px;height:29px;background:#dee2e6"></div>
<div class="t" style="left:1623px;top:737.5px;font-weight:bold">Subtotale</div>
<div class="a" style="left:1745px;top:731px;width:1px;height:29px;background:#dee2e6"></div>
<div class="t" style="left:1745px;top:737.5px;width:127px;text-align:center;font-weight:bold">#</div>
<div class="a" style="left:1779px;top:773px;width:93px;height:32px;background:#007bff;border-radius:4px"></div>
<svg class="a" style="left:1789px;top:783px" width="11" height="11" viewBox="0 0 11 11"><path d="M4.2 0h2.6v4.2H11v2.6H6.8V11H4.2V6.8H0V4.2h4.2z" fill="#fff"/></svg>
<div class="t" style="left:1803.5px;top:780.5px;color:#fff">Aggiungi..</div>
<div class="card" style="top:834px;height:200px"><div class="hd" style="height:37px;border-bottom:1px solid rgba(0,0,0,.125)"><div class="t">Addebiti e costi per fasce orarie</div></div></div>
<div class="a" style="left:286px;top:888px;width:1586px;height:29px;background:#f2f2f2;border:1px solid #dee2e6"></div>
<div class="t" style="left:291px;top:894.5px;font-weight:bold">Fascia oraria</div>
<div class="a" style="left:730px;top:888px;width:1px;height:29px;background:#dee2e6"></div>
<div class="t" style="left:735px;top:894.5px;font-weight:bold">Addebito orario</div>
<div class="a" style="left:920px;top:888px;width:1px;height:29px;background:#dee2e6"></div>
<div class="t" style="left:925px;top:894.5px;font-weight:bold">Addebito km</div>
<div class="a" style="left:1110px;top:888px;width:1px;height:29px;background:#dee2e6"></div>
<div class="t" style="left:1115px;top:894.5px;font-weight:bold">Addebito diritto ch.</div>
<div class="a" style="left:1301px;top:888px;width:1px;height:29px;background:#dee2e6"></div>
<div class="t" style="left:1306px;top:894.5px;font-weight:bold">Costo orario</div>
<div class="a" style="left:1491px;top:888px;width:1px;height:29px;background:#dee2e6"></div>
<div class="t" style="left:1496px;top:894.5px;font-weight:bold">Costo km</div>
<div class="a" style="left:1681px;top:888px;width:1px;height:29px;background:#dee2e6"></div>
<div class="t" style="left:1686px;top:894.5px;font-weight:bold">Costo diritto ch.</div>
<div class="a" style="left:286px;top:916px;width:1px;height:10px;background:#dee2e6"></div>
<div class="a" style="left:1871px;top:916px;width:1px;height:10px;background:#dee2e6"></div>
<div class="a" style="left:730px;top:916px;width:1px;height:10px;background:#dee2e6"></div>
<div class="a" style="left:734px;top:921px;width:153px;height:31px;background:#fff;border:1px solid #ced4da;border-radius:0"></div>
<div class="a" style="left:887px;top:921px;width:29px;height:31px;background:#e9ecef;border:1px solid #ced4da;border-radius:0 4px 4px 0"></div>
<div class="a" style="left:920px;top:916px;width:1px;height:10px;background:#dee2e6"></div>
<div class="a" style="left:924px;top:921px;width:153px;height:31px;background:#fff;border:1px solid #ced4da;border-radius:0"></div>
<div class="a" style="left:1077px;top:921px;width:29px;height:31px;background:#e9ecef;border:1px solid #ced4da;border-radius:0 4px 4px 0"></div>
<div class="a" style="left:1110px;top:916px;width:1px;height:10px;background:#dee2e6"></div>
<div class="a" style="left:1114px;top:921px;width:154px;height:31px;background:#fff;border:1px solid #ced4da;border-radius:0"></div>
<div class="a" style="left:1268px;top:921px;width:29px;height:31px;background:#e9ecef;border:1px solid #ced4da;border-radius:0 4px 4px 0"></div>
<div class="a" style="left:1301px;top:916px;width:1px;height:10px;background:#dee2e6"></div>
<div class="a" style="left:1305px;top:921px;width:153px;height:31px;background:#fff;border:1px solid #ced4da;border-radius:0"></div>
<div class="a" style="left:1458px;top:921px;width:29px;height:31px;background:#e9ecef;border:1px solid #ced4da;border-radius:0 4px 4px 0"></div>
<div class="a" style="left:1491px;top:916px;width:1px;height:10px;background:#dee2e6"></div>
<div class="a" style="left:1495px;top:921px;width:153px;height:31px;background:#fff;border:1px solid #ced4da;border-radius:0"></div>
<div class="a" style="left:1648px;top:921px;width:29px;height:31px;background:#e9ecef;border:1px solid #ced4da;border-radius:0 4px 4px 0"></div>
<div class="a" style="left:1681px;top:916px;width:1px;height:10px;background:#dee2e6"></div>
<div class="a" style="left:1685px;top:921px;width:153px;height:31px;background:#fff;border:1px solid #ced4da;border-radius:0"></div>
<div class="a" style="left:1838px;top:921px;width:29px;height:31px;background:#e9ecef;border:1px solid #ced4da;border-radius:0 4px 4px 0"></div>
<div class="a" style="left:1908px;top:0;width:12px;height:924px;background:#d0d0d0;z-index:10"></div>
<div class="a" style="left:1911px;top:3px;width:6px;height:727px;border-radius:3px;background:#797d80;z-index:11"></div>
</body></html>
